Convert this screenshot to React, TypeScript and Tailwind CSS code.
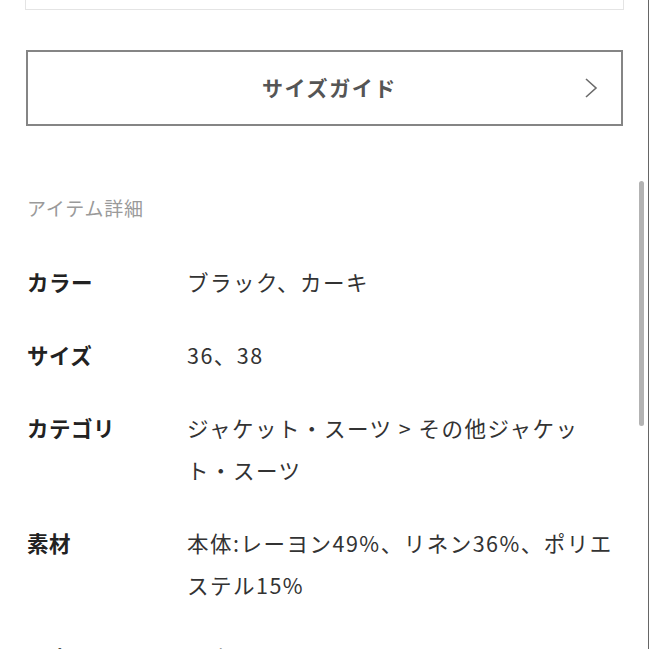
const rows: { label: string; lines: string[] }[] = [
  { label: 'カラー', lines: ['ブラック、カーキ'] },
  { label: 'サイズ', lines: ['36、38'] },
  { label: 'カテゴリ', lines: ['ジャケット・スーツ > その他ジャケッ', 'ト・スーツ'] },
  { label: '素材', lines: ['本体:レーヨン49%、リネン36%、ポリエ', 'ステル15%'] },
  { label: '原産国', lines: ['日本'] },
]

function Chevron() {
  return (
    <svg width="16" height="22" viewBox="0 0 16 22" fill="none">
      <polyline points="3,2 13,11 3,20" stroke="#6b6b6b" strokeWidth="1.6" />
    </svg>
  )
}

export default function App() {
  return (
    <div
      className="relative w-[649px] h-[649px] overflow-hidden bg-white"
      style={{ fontFamily: '"Noto Sans CJK JP", "Noto Sans", sans-serif' }}
    >
      {/* previous card, only its bottom edge shows */}
      <div className="ml-[25px] w-[599px] h-[10px] border-x border-b border-[#e4e4e4]" />

      {/* size guide */}
      <button className="mt-[40px] ml-[26px] w-[597px] h-[76px] border-2 border-[#858585] flex items-center justify-between pl-[26px] pr-[22px]">
        <span className="w-[16px]" />
        <span className="text-[21px] font-bold text-[#555] tracking-[1.6px] pl-[6px]">サイズガイド</span>
        <Chevron />
      </button>

      {/* details */}
      <div className="mt-[68px] px-[27px]">
        <h3 className="text-[19px] leading-[28px] text-[#9a9a9a] tracking-[0.8px]">アイテム詳細</h3>
        <div className="mt-[39px] flex flex-col gap-[31px]">
          {rows.map((row) => (
            <div key={row.label} className="flex text-[21.5px] leading-[42px]">
              <div className="w-[160px] shrink-0 font-bold text-[#222] tracking-[0.5px]">{row.label}</div>
              <div className="flex-1 text-[#333] tracking-[1.5px] whitespace-nowrap">
                {row.lines.map((line, i) => (
                  <div key={i}>{line}</div>
                ))}
              </div>
            </div>
          ))}
        </div>
      </div>

      {/* scroll indicator */}
      <div className="absolute left-[639px] top-[181px] w-[5px] h-[245px] rounded-full bg-[#b3b3b3]" />
      <div className="absolute right-0 top-0 w-[1px] h-full bg-[#666]" />
    </div>
  )
}
